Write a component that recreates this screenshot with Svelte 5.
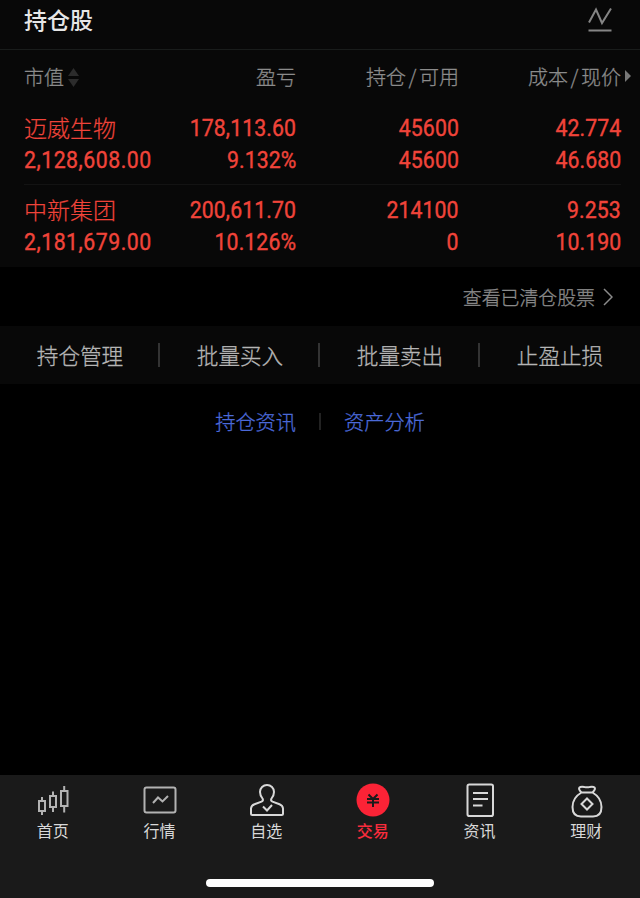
<script lang="ts">
  type Holding = {
    name: string;
    value: string;
    profit: string;
    ratio: string;
    amount: string;
    available: string;
    cost: string;
    price: string;
  };

  const holdings: Holding[] = [
    {
      name: "迈威生物",
      value: "2,128,608.00",
      profit: "178,113.60",
      ratio: "9.132%",
      amount: "45600",
      available: "45600",
      cost: "42.774",
      price: "46.680",
    },
    {
      name: "中新集团",
      value: "2,181,679.00",
      profit: "200,611.70",
      ratio: "10.126%",
      amount: "214100",
      available: "0",
      cost: "9.253",
      price: "10.190",
    },
  ];

  const actions = ["持仓管理", "批量买入", "批量卖出", "止盈止损"];

  const tabs = [
    { id: "home", label: "首页" },
    { id: "market", label: "行情" },
    { id: "watch", label: "自选" },
    { id: "trade", label: "交易" },
    { id: "news", label: "资讯" },
    { id: "wealth", label: "理财" },
  ];

  let active = $state("trade");
</script>

<div class="screen">
  <header>
    <h1>持仓股</h1>
    <svg class="chart" width="24" height="26" viewBox="0 0 24 26">
      <path d="M1 15.500 8 2.500 14 16 23 1.500M.5 23.500h23" />
    </svg>
  </header>

  <section class="holdings">
    <div class="row head">
      <span class="sort">
        市值
        <svg width="11" height="19" viewBox="0 0 11 19">
          <path d="M5.500 0 11 8H0zM5.500 19 0 11h11z" />
        </svg>
      </span>
      <span>盈亏</span>
      <span>持仓<i>/</i>可用</span>
      <span>成本<i>/</i>现价</span>
      <svg class="more" width="6" height="12" viewBox="0 0 6 12">
        <path d="M0 0 6 6 0 12z" />
      </svg>
    </div>
    {#each holdings as item}
      <div class="row stock">
        <div class="cell first">
          <span class="name">{item.name}</span>
          <span class="num">{item.value}</span>
        </div>
        <div class="cell">
          <span class="num">{item.profit}</span>
          <span class="num">{item.ratio}</span>
        </div>
        <div class="cell">
          <span class="num">{item.amount}</span>
          <span class="num">{item.available}</span>
        </div>
        <div class="cell">
          <span class="num">{item.cost}</span>
          <span class="num">{item.price}</span>
        </div>
      </div>
    {/each}
  </section>

  <div class="cleared">
    查看已清仓股票
    <svg width="10" height="18" viewBox="0 0 10 18">
      <path d="M1 1 9 9 1 17" />
    </svg>
  </div>

  <div class="actions">
    {#each actions as action}
      <div class="action">{action}</div>
    {/each}
  </div>

  <div class="links">
    <span>持仓资讯</span>
    <span class="bar"></span>
    <span>资产分析</span>
  </div>

  <nav>
    <div class="tabs">
      {#each tabs as tab}
        <button class:active={active === tab.id} onclick={() => (active = tab.id)}>
          <svg class={tab.id} width="36" height="36" viewBox="0 0 36 36">
            {#if tab.id === "home"}
              <path d="M4 18h6v10H4zM7 14v4M7 28v4M15 13h6v11h-6zM18 8.500V13M18 24v5M26 8h6.500v15H26zM29.200 3v5M29.200 23v6.500" />
            {:else if tab.id === "market"}
              <rect x="2.500" y="4.500" width="31" height="25" rx="2" />
              <path d="M11 20 16 14.500l4.500 4L26 13" />
            {:else if tab.id === "watch"}
              <path d="M13.500 15.500C11.500 13 11 11.500 11 9a7 7 0 0 1 14 0c0 2.500-.5 4-2.500 6.500-.8 1.500-.5 2.500 1 3.200l7 2.600c2.300.9 3.300 2 3.500 4.200v5c0 1-.5 1.500-1.500 1.500h-29C2.500 32 2 31.500 2 30.500v-5c.2-2.200 1.200-3.300 3.500-4.200l7-2.600c1.500-.7 1.800-1.700 1-3.200z" />
              <path d="M14 23.500l4 4 5-5.500" />
            {:else if tab.id === "trade"}
              <circle cx="18" cy="17" r="16.500" />
              <path d="M13.500 11.500 18 16l4.500-4.500M12 16h12M12 19.500h12M18 16v8" />
            {:else if tab.id === "news"}
              <rect x="5.500" y="1.500" width="25.500" height="31.500" rx="1.800" />
              <path d="M11 10h15M11 16h15M11 22.500h9.500" />
            {:else}
              <path d="M12.500 9.500C10 7 9.500 5.500 10.500 4.500c1-1 3.500-.8 5-.5 1.700.3 3.300.3 5 0 1.500-.3 4-.5 5 .5s.5 2.500-2 5zM12.500 9.500C6.500 13 3.500 18 3.500 24c0 6 3 9.500 8.500 9.500h12c5.500 0 8.500-3.500 8.500-9.500 0-6-3-11-9-14.500" />
              <path d="M18 15.500 23.500 21 18 26.500 12.500 21z" />
            {/if}
          </svg>
          <span>{tab.label}</span>
        </button>
      {/each}
    </div>
    <div class="home-bar"></div>
  </nav>
</div>

<style>
  :global(body) {
    background: #000;
  }
  .screen {
    display: flex;
    flex-direction: column;
    height: 898px;
    width: 640px;
    overflow: hidden;
    background: #000;
    color: #8b8b8b;
    font-family: "Noto Sans CJK SC", sans-serif;
    font-weight: 300;
    -webkit-text-stroke: 0.3px currentColor;
  }
  svg {
    fill: none;
    stroke: currentColor;
    stroke-width: 2;
    flex: none;
  }
  header {
    box-sizing: border-box;
    height: 50px;
    padding: 0 28px 9px 24px;
    display: flex;
    align-items: center;
    justify-content: space-between;
    background: #080808;
    border-bottom: 1px solid #191c1b;
  }
  h1 {
    margin: 0;
    padding-bottom: 2px;
    font-size: 23px;
    line-height: 38px;
    font-weight: 500;
    color: #e6e6e6;
    -webkit-text-stroke-width: 0;
  }
  .chart {
    color: #858585;
  }
  .holdings {
    background: #080808;
    height: 217px;
  }
  .row {
    display: grid;
    grid-template-columns: 132px 140px 163px 162px;
    margin: 0 19px 0 24px;
    text-align: right;
  }
  .head {
    position: relative;
    height: 52px;
    line-height: 54px;
    font-size: 20px;
  }
  .head i {
    font-style: normal;
    padding: 0 2.5px;
  }
  .sort {
    display: flex;
    align-items: center;
    gap: 4px;
  }
  .sort svg,
  .more {
    fill: #2c2c2c;
    stroke: none;
  }
  .more {
    position: absolute;
    right: -10px;
    top: 20px;
    fill: #777;
  }
  .stock {
    box-sizing: border-box;
    height: 82px;
    padding-top: 10px;
    color: #f0443a;
  }
  .stock + .stock {
    padding-top: 9px;
    border-top: 1px solid #131313;
  }
  .cell {
    display: flex;
    flex-direction: column;
    align-items: flex-end;
    line-height: 31.5px;
  }
  .name {
    font-size: 23px;
    -webkit-text-stroke-width: 0.2px;
  }
  .num {
    font-family: Roboto, sans-serif;
    font-size: 24px;
    font-weight: 400;
    letter-spacing: 0.1px;
    white-space: nowrap;
    transform: translateY(0.7px) scaleX(0.885);
    transform-origin: right;
    -webkit-text-stroke-width: 0.4px;
  }
  .first {
    align-items: flex-start;
  }
  .first .num {
    letter-spacing: 0.6px;
    transform-origin: left;
  }
  .cleared {
    box-sizing: border-box;
    height: 59px;
    padding-right: 27px;
    display: flex;
    align-items: center;
    justify-content: flex-end;
    gap: 8px;
    font-size: 18.9px;
    line-height: 26px;
  }
  .cleared svg {
    stroke-width: 1.5;
  }
  .actions {
    display: grid;
    grid-template-columns: repeat(4, 1fr);
    height: 58px;
    align-items: center;
    background: #080808;
    color: #b5b5b5;
    font-size: 21.6px;
  }
  .action {
    line-height: 24px;
    text-align: center;
  }
  .action:not(:last-child) {
    padding-left: 2px;
    border-right: 2px solid #333;
  }
  .links {
    display: flex;
    align-items: center;
    justify-content: center;
    gap: 23px;
    height: 75px;
    color: #4b69d8;
    font-size: 20.2px;
  }
  .bar {
    width: 2px;
    height: 17px;
    background: #222;
  }
  nav {
    margin-top: auto;
    height: 123px;
    background: #1a1a1a;
  }
  .tabs {
    display: grid;
    grid-template-columns: repeat(6, 1fr);
    padding-top: 8px;
  }
  button {
    display: flex;
    flex-direction: column;
    align-items: center;
    padding: 0;
    border: 0;
    background: none;
    color: #d8d8d8;
    font: 400 16px/22px "Noto Sans CJK SC", sans-serif;
    -webkit-text-stroke-width: 0;
  }
  button span {
    padding: 0 1px 2px 0;
  }
  .home,
  .market {
    color: #b2b2b2;
  }
  .active {
    color: #f82c3c;
    font-weight: 500;
  }
  .trade circle {
    fill: #fb2336;
    stroke: none;
  }
  .trade path {
    stroke: #1a1a1a;
  }
  .home-bar {
    width: 228px;
    height: 8px;
    margin: 36px auto 0;
    border-radius: 4px;
    background: #fff;
  }
</style>
